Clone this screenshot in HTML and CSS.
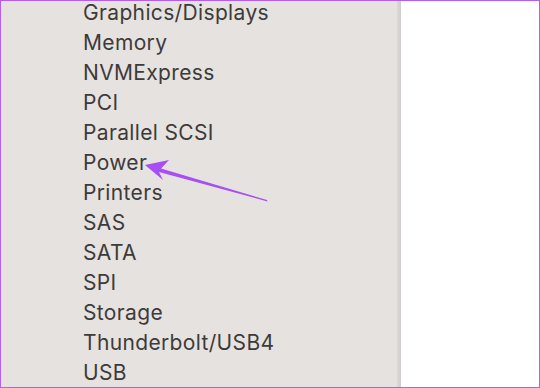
FILE: index.html
```html
<!DOCTYPE html>
<html lang="en">
<head>
    <meta charset="UTF-8">
    <meta name="viewport" content="width=device-width, initial-scale=1.0">
    <title>System Information</title>
    <link rel="stylesheet" href="styles.css">
</head>
<body>

<div class="window">
    <div class="sidebar">
        <ul class="hw-list">
            <li>Graphics/Displays</li>
            <li>Memory</li>
            <li>NVMExpress</li>
            <li>PCI</li>
            <li>Parallel SCSI</li>
            <li>Power</li>
            <li>Printers</li>
            <li>SAS</li>
            <li>SATA</li>
            <li>SPI</li>
            <li>Storage</li>
            <li>Thunderbolt/USB4</li>
            <li>USB</li>
        </ul>
    </div>
    <div class="divider"></div>
    <div class="detail"></div>

    <!-- annotation arrow pointing at Power -->
    <svg class="pointer" width="540" height="388" viewBox="0 0 540 388">
        <polygon points="145,165 169,160 161,168.5 267,200 267.5,201.5 159,172 163,180" fill="#a64ff4"/>
    </svg>
</div>

</body>
</html>
```

FILE: styles.css
```css
body {
    margin: 0;
    padding: 0;
    font-family: Inter, "Noto Sans", sans-serif;
    background-color: white;
}
.window {
    position: relative;
    width: 540px;
    height: 388px;
    box-sizing: border-box;
    border: 1px solid #b25ef2;
    display: flex;
    overflow: hidden;
}
.sidebar {
    width: 396px;
    background-color: #e6e2df;
}
.hw-list {
    list-style: none;
    margin: -3px 0 0 0;
    padding: 0 0 0 82px;
}
.hw-list li {
    font-size: 21px;
    line-height: 30px;
    letter-spacing: 0.35px;
    color: #3d3b3a;
}
.divider {
    width: 4px;
    background: linear-gradient(to right, #dcd8d5, #d2cecb);
}
.detail {
    flex-grow: 1;
    background-color: white;
}
.pointer {
    position: absolute;
    left: -1px;
    top: -1px;
}
```
